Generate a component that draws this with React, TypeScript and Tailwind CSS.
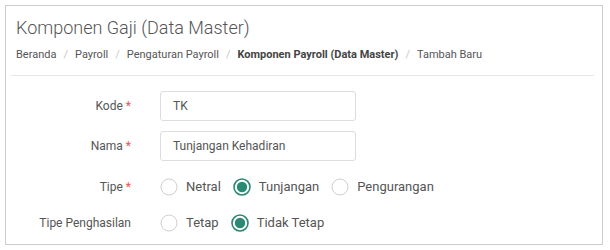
import { useState } from 'react';

const crumbs = ['Beranda', 'Payroll', 'Pengaturan Payroll'];

function Radio({ checked, label, onClick }: { checked: boolean; label: string; onClick: () => void }) {
  return (
    <button type="button" onClick={onClick} className="mr-[12px] flex items-center">
      <svg width="18" height="18" viewBox="0 0 18 18" className="shrink-0">
        <circle cx="9" cy="9" r="8" fill="#fff" stroke={checked ? '#2b8a73' : '#d0d0d0'} strokeWidth={checked ? 1.6 : 1} />
        {checked && <circle cx="9" cy="9" r="5.2" fill="#2b8a73" />}
      </svg>
      <span className="ml-2 text-[13px] leading-5 text-[#555]">{label}</span>
    </button>
  );
}

function Label({ text, required }: { text: string; required?: boolean }) {
  return (
    <div className="w-[125px] shrink-0 text-right text-[12px] leading-4 text-[#555]">
      {text}
      {required && <span className="ml-[3px] text-[#ef5350]">*</span>}
    </div>
  );
}

export default function App() {
  const [tipe, setTipe] = useState('Tunjangan');
  const [penghasilan, setPenghasilan] = useState('Tidak Tetap');

  return (
    <div className="h-[250px] w-[610px] bg-white pl-[5px] pr-[7px] pt-[5px] font-['Roboto',sans-serif]">
      <div className="h-[240px] border border-[#cccccc] bg-white">
        <div className="pl-[10px] pt-[11px]">
          <h1 className="text-[18px] font-light leading-[22px] text-[#555]">Komponen Gaji (Data Master)</h1>
          <div className="mt-2 flex items-center text-[11px] leading-4 text-[#555]">
            {crumbs.map((c) => (
              <span key={c} className="flex items-center">
                {c}
                <span className="mx-[7px] text-[#c8c8c8]">/</span>
              </span>
            ))}
            <span className="font-bold text-[#444]">Komponen Payroll (Data Master)</span>
            <span className="mx-[7px] text-[#c8c8c8]">/</span>
            <span>Tambah Baru</span>
          </div>
        </div>
        <div className="ml-[5px] mr-[8px] mt-3 h-px bg-[#e6e6e6]" />

        <div className="pt-[15px]">
          <div className="flex items-center">
            <Label text="Kode" required />
            <input
              defaultValue="TK"
              className="ml-[29px] h-[30px] w-[196px] rounded-[3px] border border-[#dddddd] px-3 text-[12px] text-[#555] outline-none"
            />
          </div>
          <div className="mt-[10px] flex items-center">
            <Label text="Nama" required />
            <input
              defaultValue="Tunjangan Kehadiran"
              className="ml-[29px] h-[30px] w-[196px] rounded-[3px] border border-[#dddddd] px-3 text-[12px] text-[#555] outline-none"
            />
          </div>
          <div className="mt-4 flex h-5 items-center">
            <Label text="Tipe" required />
            <div className="ml-[29px] flex items-center">
              {['Netral', 'Tunjangan', 'Pengurangan'].map((t) => (
                <Radio key={t} label={t} checked={tipe === t} onClick={() => setTipe(t)} />
              ))}
            </div>
          </div>
          <div className="mt-4 flex h-5 items-center">
            <Label text="Tipe Penghasilan" />
            <div className="ml-[29px] flex items-center">
              {['Tetap', 'Tidak Tetap'].map((t) => (
                <Radio key={t} label={t} checked={penghasilan === t} onClick={() => setPenghasilan(t)} />
              ))}
            </div>
          </div>
        </div>
      </div>
    </div>
  );
}
